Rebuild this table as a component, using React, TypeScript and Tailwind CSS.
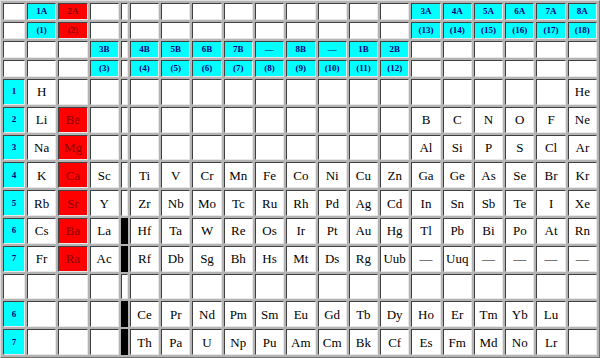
import React from "react";

type Cell = { t?: string; k: "w" | "c" | "r" | "b" | "h" | "hr"; };

const W: Cell = { k: "w" };
const B: Cell = { k: "b" };
const e = (t: string): Cell => ({ t, k: "w" });
const er = (t: string): Cell => ({ t, k: "r" });
const hc = (t: string): Cell => ({ t, k: "h" });
const hr = (t: string): Cell => ({ t, k: "hr" });

const blanks = (n: number): Cell[] => Array.from({ length: n }, () => W);

const headerRows: Cell[][] = [
  [W, hc("1A"), hr("2A"), W, W, ...blanks(9), hc("3A"), hc("4A"), hc("5A"), hc("6A"), hc("7A"), hc("8A")],
  [W, hc("(1)"), hr("(2)"), W, W, ...blanks(9), hc("(13)"), hc("(14)"), hc("(15)"), hc("(16)"), hc("(17)"), hc("(18)")],
  [W, W, W, hc("3B"), W, hc("4B"), hc("5B"), hc("6B"), hc("7B"), hc("—"), hc("8B"), hc("—"), hc("1B"), hc("2B"), ...blanks(6)],
  [W, W, W, hc("(3)"), W, hc("(4)"), hc("(5)"), hc("(6)"), hc("(7)"), hc("(8)"), hc("(9)"), hc("(10)"), hc("(11)"), hc("(12)"), ...blanks(6)],
];

const row = (list: string[]) => list.map((s) => (s ? e(s) : W));

const bodyRows: Cell[][] = [
  [hc("1"), e("H"), W, W, W, ...blanks(14), e("He")],
  [hc("2"), e("Li"), er("Be"), W, W, ...blanks(9), ...row(["B", "C", "N", "O", "F", "Ne"])],
  [hc("3"), e("Na"), er("Mg"), W, W, ...blanks(9), ...row(["Al", "Si", "P", "S", "Cl", "Ar"])],
  [hc("4"), e("K"), er("Ca"), e("Sc"), W, ...row(["Ti", "V", "Cr", "Mn", "Fe", "Co", "Ni", "Cu", "Zn", "Ga", "Ge", "As", "Se", "Br", "Kr"])],
  [hc("5"), e("Rb"), er("Sr"), e("Y"), W, ...row(["Zr", "Nb", "Mo", "Tc", "Ru", "Rh", "Pd", "Ag", "Cd", "In", "Sn", "Sb", "Te", "I", "Xe"])],
  [hc("6"), e("Cs"), er("Ba"), e("La"), B, ...row(["Hf", "Ta", "W", "Re", "Os", "Ir", "Pt", "Au", "Hg", "Tl", "Pb", "Bi", "Po", "At", "Rn"])],
  [hc("7"), e("Fr"), er("Ra"), e("Ac"), B, ...row(["Rf", "Db", "Sg", "Bh", "Hs", "Mt", "Ds", "Rg", "Uub", "—", "Uuq", "—", "—", "—", "—"])],
  [W, W, W, W, W, ...blanks(15)],
  [hc("6"), W, W, W, B, ...row(["Ce", "Pr", "Nd", "Pm", "Sm", "Eu", "Gd", "Tb", "Dy", "Ho", "Er", "Tm", "Yb", "Lu", ""])],
  [hc("7"), W, W, W, B, ...row(["Th", "Pa", "U", "Np", "Pu", "Am", "Cm", "Bk", "Cf", "Es", "Fm", "Md", "No", "Lr", ""])],
];

function CellView({ c, header }: { c: Cell; header: boolean }) {
  if (c.k === "b") {
    return <div className="bg-black" />;
  }
  const bg =
    c.k === "h" ? "bg-[#00ffff]" : c.k === "hr" || c.k === "r" ? "bg-[#ff0000]" : "bg-white";
  const isHead = c.k === "h" || c.k === "hr";
  const color = c.k === "hr" || c.k === "r" ? "text-[#8b0000]" : isHead ? "text-[#000080]" : "text-black";
  const font = isHead ? "text-[9px] font-bold" : "text-[13px]";
  return (
    <div
      className={`flex items-center justify-center border border-t-[#404040] border-l-[#404040] border-b-[#e8e8e8] border-r-[#e8e8e8] ${bg} ${color} ${font} leading-none`}
    >
      {c.t}
    </div>
  );
}

export default function App() {
  const all = [...headerRows, ...bodyRows];
  return (
    <div
      className="w-[600px] h-[358px] bg-[#b4b4b4] border border-t-[#e0e0e0] border-l-[#e0e0e0] border-b-[#707070] border-r-[#707070] p-[2px] box-border"
      style={{ fontFamily: '"Liberation Serif", "Times New Roman", serif' }}
    >
      <div className="grid h-full w-full gap-[2px] grid-cols-[22px_repeat(3,1fr)_7px_repeat(15,1fr)] grid-rows-[repeat(4,17px)_repeat(10,1fr)]">
        {all.map((r, i) =>
          r.map((c, j) => <CellView key={`${i}-${j}`} c={c} header={i < 4} />)
        )}
      </div>
    </div>
  );
}
